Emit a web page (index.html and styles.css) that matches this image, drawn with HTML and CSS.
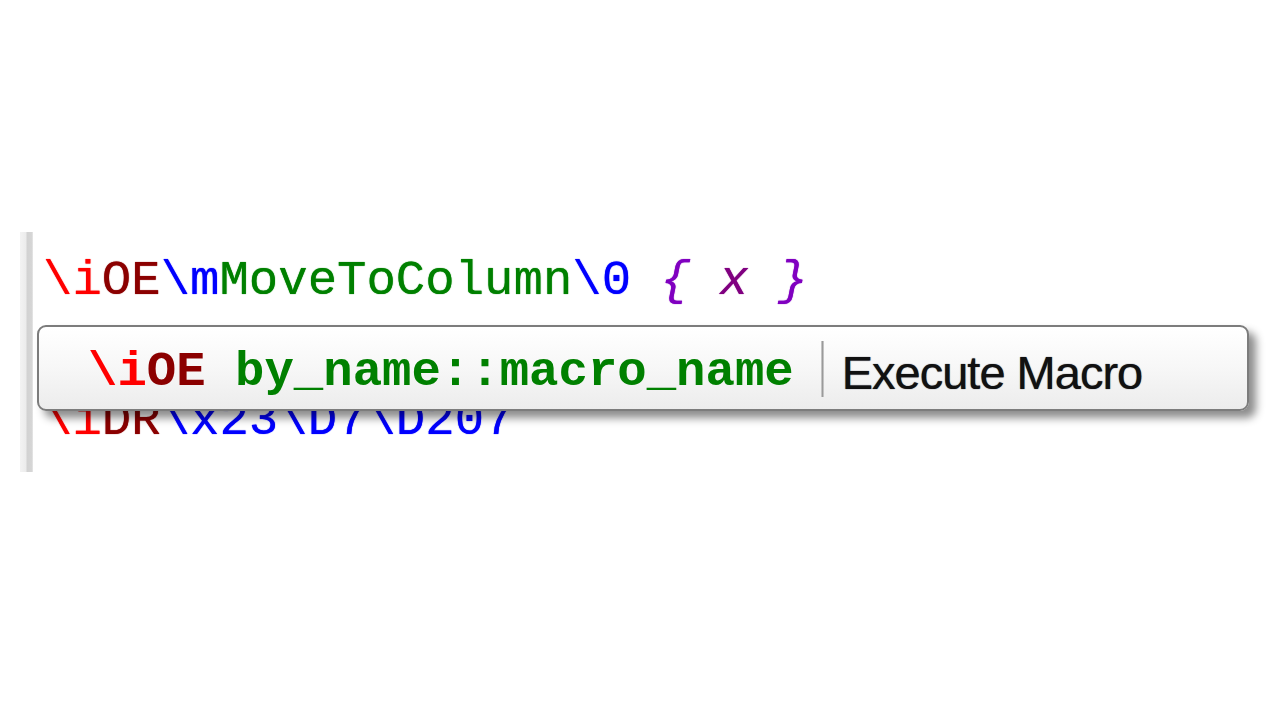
FILE: index.html
```html
<!DOCTYPE html>
<html>
<head>
<meta charset="utf-8">
<link rel="stylesheet" href="styles.css">
</head>
<body>
<div class="editor">
  <div class="gutter"></div>
  <div class="code">
    <div class="line"><span class="esc">\i</span><span class="cmd">OE</span><span class="blue">\m</span><span class="green">MoveToColumn</span><span class="blue">\0</span> <span class="brace">{</span> <span class="arg">x</span> <span class="brace">}</span></div>
    <div class="line"></div>
    <div class="line"><span class="esc">\i</span><span class="cmd">DR</span><span class="blue">\x23\D7\D207</span></div>
    <div class="popup">
      <div class="sig"><span class="esc">\i</span><span class="cmd">OE</span> <span class="green">by_name::macro_name</span></div>
      <div class="sep"></div>
      <div class="desc">Execute Macro</div>
    </div>
  </div>
</div>
</body>
</html>
```

FILE: styles.css
```css
html, body {
  margin: 0;
  padding: 0;
  background: #ffffff;
  width: 1280px;
  height: 719px;
  overflow: hidden;
}

.editor {
  display: flex;
  padding-top: 232px;
  padding-left: 20px;
}

.gutter {
  width: 13px;
  height: 240px;
  background: linear-gradient(to right, #f3f3f3 0, #ececec 6px, #d2d2d2 7px, #d6d6d6 12px, #ededed 13px);
}

.code {
  position: relative;
  padding-left: 10px;
  padding-top: 14px;
  font-family: "Liberation Mono", "Courier New", monospace;
  font-size: 49px;
}

.line {
  height: 70px;
  line-height: 70px;
  white-space: pre;
  text-shadow: 0 0 1px currentColor;
}

.esc { color: #ff0000; }
.cmd { color: #8b0000; }
.blue { color: #0000ff; }
.green { color: #008000; }
.brace { color: #8000c0; font-style: italic; }
.arg { color: #800080; font-style: italic; }

.popup {
  position: absolute;
  left: 4px;
  top: 93px;
  width: 1212px;
  height: 86px;
  border: 2px solid #7c7c7c;
  border-radius: 9px;
  background: linear-gradient(to bottom, #ffffff 0%, #f7f7f7 50%, #ececec 100%);
  box-shadow: 7px 7px 9px rgba(0, 0, 0, 0.45);
  display: flex;
  align-items: center;
  padding-left: 49px;
  padding-top: 8px;
  box-sizing: border-box;
}

.sig {
  font-weight: bold;
  white-space: pre;
}

.sep {
  width: 3px;
  height: 56px;
  margin-left: 27px;
  margin-right: 18px;
  margin-top: -6px;
  background: linear-gradient(to right, #d8d8d8, #9a9a9a, #d8d8d8);
}

.desc {
  font-family: "Liberation Sans", Arial, sans-serif;
  font-size: 47px;
  letter-spacing: -1px;
  color: #111111;
  text-shadow: 0 0 1px #223;
}
```
